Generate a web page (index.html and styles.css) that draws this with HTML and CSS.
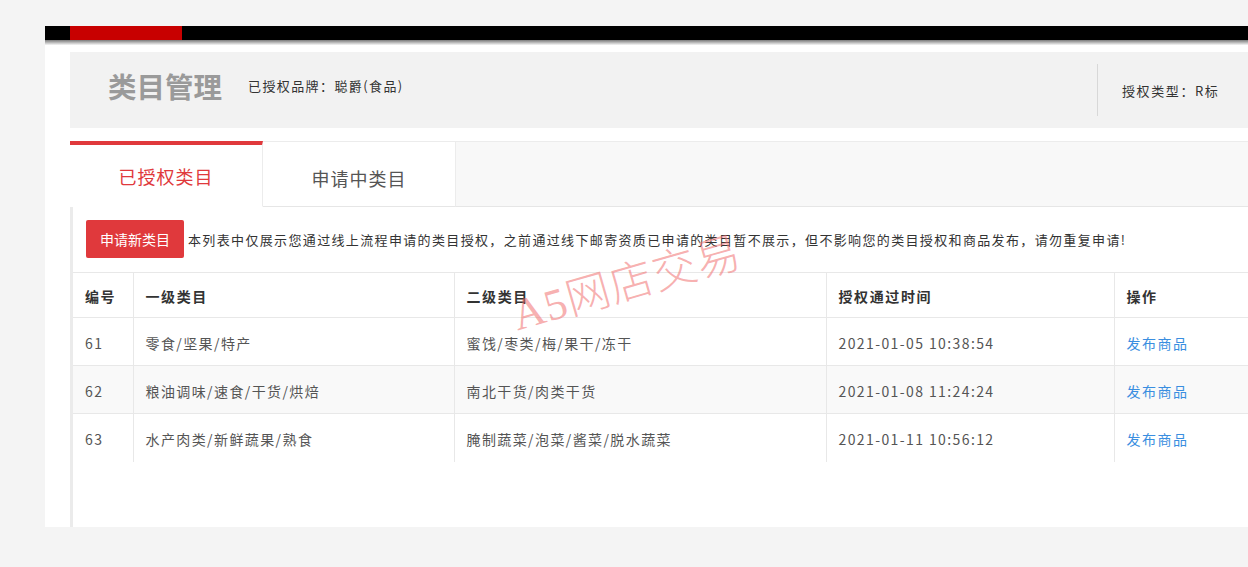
FILE: index.html
```html
<!DOCTYPE html>
<html lang="zh-CN">
<head>
<meta charset="utf-8">
<title>类目管理</title>
<link rel="stylesheet" href="styles.css">
</head>
<body>
<div class="page">
  <div class="topbar"><div class="topbar-red"></div></div>
  <div class="topbar-shadow"></div>
  <div class="main">
    <div class="header">
      <h1 class="title">类目管理</h1>
      <span class="brand">已授权品牌：聪爵(食品)</span>
      <div class="header-right">授权类型：R标</div>
    </div>
    <div class="tabs">
      <div class="tab active">已授权类目</div>
      <div class="tab">申请中类目</div>
    </div>
    <div class="content">
      <div class="toolbar">
        <button class="btn-new">申请新类目</button>
        <span class="notice">本列表中仅展示您通过线上流程申请的类目授权，之前通过线下邮寄资质已申请的类目暂不展示，但不影响您的类目授权和商品发布，请勿重复申请!</span>
        <span class="watermark">A5网店交易</span>
      </div>
      <table class="grid">
        <colgroup>
          <col class="c1"><col class="c2"><col class="c3"><col class="c4"><col class="c5">
        </colgroup>
        <thead>
          <tr><th>编号</th><th>一级类目</th><th>二级类目</th><th>授权通过时间</th><th>操作</th></tr>
        </thead>
        <tbody>
          <tr><td>61</td><td>零食/坚果/特产</td><td>蜜饯/枣类/梅/果干/冻干</td><td>2021-01-05 10:38:54</td><td><a class="link" href="#">发布商品</a></td></tr>
          <tr class="alt"><td>62</td><td>粮油调味/速食/干货/烘焙</td><td>南北干货/肉类干货</td><td>2021-01-08 11:24:24</td><td><a class="link" href="#">发布商品</a></td></tr>
          <tr><td>63</td><td>水产肉类/新鲜蔬果/熟食</td><td>腌制蔬菜/泡菜/酱菜/脱水蔬菜</td><td>2021-01-11 10:56:12</td><td><a class="link" href="#">发布商品</a></td></tr>
        </tbody>
      </table>
    </div>
  </div>
</div>
</body>
</html>
```

FILE: styles.css
```css
* { box-sizing: border-box; }
html, body {
  margin: 0;
  padding: 0;
  background: #f4f4f4;
  overflow: hidden;
}
body {
  font-family: "Microsoft YaHei", "Noto Sans CJK SC", sans-serif;
  color: #333;
  width: 1248px;
  height: 567px;
}
.page {
  margin: 26px 0 0 45px;
  width: 1203px;
}
.topbar {
  height: 14px;
  background: #000;
  padding-left: 25px;
}
.topbar-red {
  width: 112px;
  height: 14px;
  background: #c80000;
}
.topbar-shadow {
  height: 5px;
  background: linear-gradient(#7a7a7a, #f6f6f6);
}
.main {
  background: #fff;
  padding: 7px 0 0 25px;
  height: 482px;
}
.header {
  display: flex;
  align-items: center;
  height: 76px;
  background: #f2f2f2;
  padding-left: 38px;
}
.title {
  margin: -10px 0 0 0;
  font-size: 28.5px;
  font-weight: bold;
  color: #9a9a9a;
}
.brand {
  margin: -10px 0 0 26px;
  font-size: 13px;
  letter-spacing: 1.4px;
  color: #333;
}
.header-right {
  margin-left: auto;
  width: 151px;
  height: 52px;
  border-left: 1px solid #d8d8d8;
  padding-left: 24px;
  display: flex;
  align-items: center;
  font-size: 13px;
  letter-spacing: 1.6px;
  color: #333;
  padding-top: 1px;
}
.tabs {
  display: flex;
  margin-top: 13px;
  height: 66px;
  background: #f8f8f8;
  border-top: 1px solid #ececec;
  border-bottom: 1px solid #e6e6e6;
}
.tab {
  width: 193px;
  display: flex;
  align-items: center;
  justify-content: center;
  font-size: 18px;
  letter-spacing: 1px;
  color: #555;
  background: #fff;
  border-right: 1px solid #ececec;
  margin-bottom: -1px;
  border-bottom: 1px solid #e6e6e6;
  padding-top: 7px;
}
.tab.active {
  color: #e0393c;
  border-top: 4px solid #e0393c;
  margin-top: -1px;
  border-bottom: 1px solid #fff;
  padding-top: 1px;
}
.content {
  border-left: 3px solid #ebebeb;
  height: 320px;
}
.toolbar {
  position: relative;
  display: flex;
  align-items: center;
  padding: 13px 0 14px 13px;
}
.btn-new {
  height: 38px;
  width: 98px;
  border: none;
  border-radius: 2px;
  background: #e0393c;
  color: #fff;
  font-family: inherit;
  font-size: 14px;
  padding: 0;
  cursor: pointer;
}
.notice {
  margin-left: 4px;
  font-size: 13px;
  letter-spacing: 1.35px;
  color: #333;
  white-space: nowrap;
}
.watermark {
  position: absolute;
  left: 448px;
  top: 72px;
  font-family: "Liberation Serif", "Noto Sans CJK SC", serif;
  font-size: 44px;
  color: rgba(240, 110, 110, 0.55);
  transform: rotate(-16deg);
  transform-origin: left bottom;
  white-space: nowrap;
  letter-spacing: 1px;
  font-weight: 300;
  pointer-events: none;
  z-index: 2;
}
.grid {
  border-collapse: collapse;
  table-layout: fixed;
  width: 1230px;
  font-size: 14px;
  letter-spacing: 1.4px;
}
.c1 { width: 60px; }
.c2 { width: 321px; }
.c3 { width: 372px; }
.c4 { width: 288px; }
.c5 { width: 189px; }
.grid th, .grid td {
  text-align: left;
  padding: 0 12px;
  border-top: 1px solid #e8e8e8;
  border-left: 1px solid #e8e8e8;
  white-space: nowrap;
}
.grid th:first-child, .grid td:first-child { border-left: none; }
.grid th {
  height: 45px;
  font-weight: bold;
  color: #333;
  padding-top: 1px;
  letter-spacing: 1.6px;
}
.grid td {
  height: 48px;
  color: #555;
  padding-top: 2px;
}
.grid tr.alt td { background: #f9f9f9; }
.link {
  color: #3a8ee0;
  text-decoration: none;
  font-size: 14px;
  letter-spacing: 1.5px;
}
```
